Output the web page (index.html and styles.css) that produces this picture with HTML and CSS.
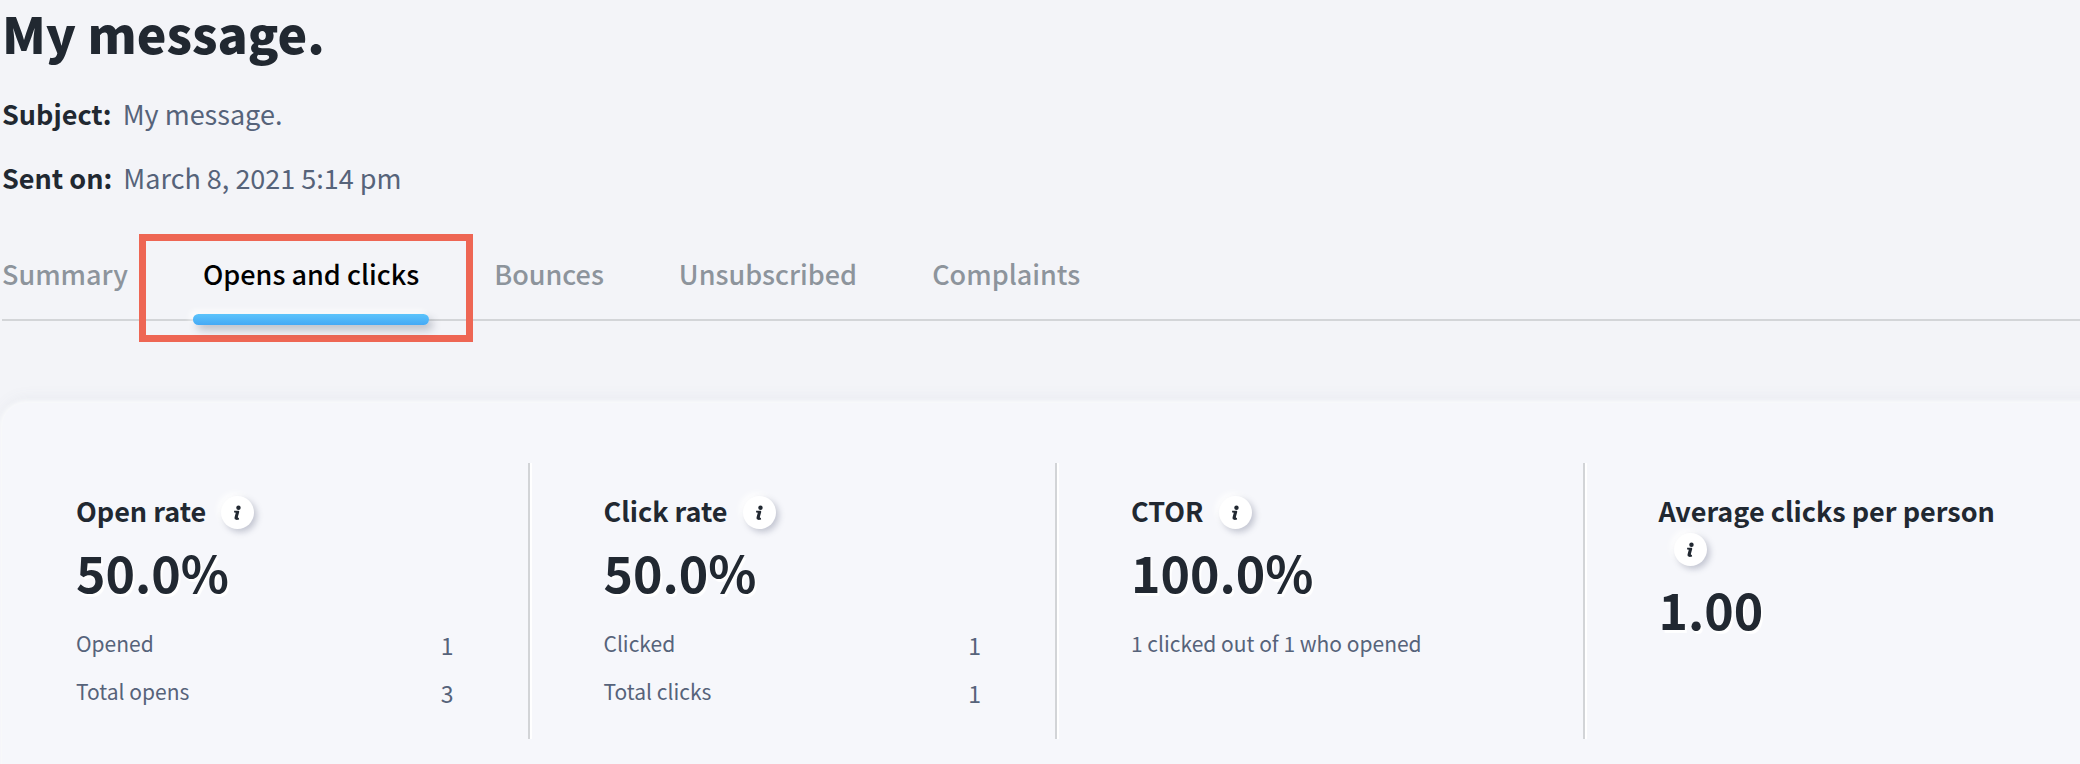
FILE: index.html
```html
<!DOCTYPE html>
<html lang="en">
<head>
    <meta charset="UTF-8">
    <meta name="viewport" content="width=device-width, initial-scale=1.0">
    <title>My message.</title>
    <link rel="stylesheet" href="styles.css">
</head>
<body>
    <header class="header">
        <h1 class="title">My message.</h1>
        <p class="meta"><strong>Subject:</strong> <span>My message.</span></p>
        <p class="meta"><strong>Sent on:</strong> <span>March 8, 2021 5:14 pm</span></p>
    </header>

    <nav class="tabs">
        <a class="tab" href="#summary">Summary</a>
        <a class="tab active" href="#opens">Opens and clicks</a>
        <a class="tab" href="#bounces">Bounces</a>
        <a class="tab" href="#unsubscribed">Unsubscribed</a>
        <a class="tab" href="#complaints">Complaints</a>
    </nav>

    <main class="card">
        <section class="stat">
            <h2 class="stat-title">Open rate<button class="info" type="button" aria-label="About open rate"><svg viewBox="0 0 34 34"><circle cx="18" cy="12" r="2.3"/><path d="M13.5 15.2h4.2c.9 0 1.3.7 1 1.6l-1.3 4.7c-.2.8.1 1.2.9 1l.4 1.6c-3 1.1-5.3.4-4.7-2.1l1.1-4.3c.2-.7-.2-.9-1.6-.8z"/></svg></button></h2>
            <p class="value">50.0%</p>
            <dl class="rows">
                <div class="row"><dt>Opened</dt><dd>1</dd></div>
                <div class="row"><dt>Total opens</dt><dd>3</dd></div>
            </dl>
        </section>

        <section class="stat">
            <h2 class="stat-title">Click rate<button class="info" type="button" aria-label="About click rate"><svg viewBox="0 0 34 34"><circle cx="18" cy="12" r="2.3"/><path d="M13.5 15.2h4.2c.9 0 1.3.7 1 1.6l-1.3 4.7c-.2.8.1 1.2.9 1l.4 1.6c-3 1.1-5.3.4-4.7-2.1l1.1-4.3c.2-.7-.2-.9-1.6-.8z"/></svg></button></h2>
            <p class="value">50.0%</p>
            <dl class="rows">
                <div class="row"><dt>Clicked</dt><dd>1</dd></div>
                <div class="row"><dt>Total clicks</dt><dd>1</dd></div>
            </dl>
        </section>

        <section class="stat">
            <h2 class="stat-title">CTOR<button class="info" type="button" aria-label="About CTOR"><svg viewBox="0 0 34 34"><circle cx="18" cy="12" r="2.3"/><path d="M13.5 15.2h4.2c.9 0 1.3.7 1 1.6l-1.3 4.7c-.2.8.1 1.2.9 1l.4 1.6c-3 1.1-5.3.4-4.7-2.1l1.1-4.3c.2-.7-.2-.9-1.6-.8z"/></svg></button></h2>
            <p class="value">100.0%</p>
            <p class="note">1 clicked out of 1 who opened</p>
        </section>

        <section class="stat">
            <h2 class="stat-title">Average clicks per person<button class="info" type="button" aria-label="About average clicks per person"><svg viewBox="0 0 34 34"><circle cx="18" cy="12" r="2.3"/><path d="M13.5 15.2h4.2c.9 0 1.3.7 1 1.6l-1.3 4.7c-.2.8.1 1.2.9 1l.4 1.6c-3 1.1-5.3.4-4.7-2.1l1.1-4.3c.2-.7-.2-.9-1.6-.8z"/></svg></button></h2>
            <p class="value">1.00</p>
        </section>
    </main>
</body>
</html>
```
FILE: styles.css
```css
* {
    box-sizing: border-box;
}

body {
    margin: 0;
    padding-left: 2px;
    background-color: #f3f4f8;
    color: #212831;
    font-family: "Noto Sans CJK SC", "Open Sans", sans-serif;
    overflow: hidden;
}

h1, h2, p, dl, dd {
    margin: 0;
}

.title {
    padding-bottom: 18px;
    font-size: 50px;
    font-weight: 900;
    line-height: 64px;
}

.meta {
    display: flex;
    gap: 11px;
    font-size: 27px;
    line-height: 64px;
}

.meta span {
    color: #56637a;
}

.tabs {
    display: flex;
    gap: 75px;
    height: 111px;
    border-bottom: 2px solid #d3d5d8;
}

.tab {
    position: relative;
    padding-top: 40px;
    color: #8d949c;
    font-size: 27px;
    font-weight: 500;
    line-height: 48px;
    text-decoration: none;
}

.active {
    color: #000;
}

/* blue bar under the current tab */
.active::after {
    content: "";
    position: absolute;
    left: -10px;
    right: -10px;
    bottom: -6px;
    height: 11px;
    border-radius: 6px;
    background: linear-gradient(#5cc4fb, #45a9f5);
    box-shadow: 4px 5px 8px rgba(60, 70, 90, 0.3), -3px -3px 6px #fff;
}

/* red frame around the current tab */
.active::before {
    content: "";
    position: absolute;
    left: -64px;
    right: -54px;
    top: 24px;
    bottom: -23px;
    border: 7px solid #ee6654;
}

.card {
    display: grid;
    grid-template-columns: repeat(4, 1fr);
    margin-top: 82px;
    margin-right: -32px;
    padding: 60px 0;
    border-radius: 24px;
    background-color: #f6f7fb;
    box-shadow: 0 0 4px 2px #fbfcfd, 0 -4px 16px rgba(100, 110, 140, 0.08);
}

.stat {
    min-height: 276px;
    padding: 29px 74px 0;
    border-right: 2px solid #d2d4d7;
    box-shadow: 2px 0 0 #fff;
}

.stat:last-child {
    border-right: none;
    box-shadow: none;
}

.stat-title {
    font-size: 27px;
    font-weight: 700;
    line-height: 37px;
}

.info {
    width: 33px;
    height: 33px;
    margin: -2px 0 2px 15px;
    padding: 0;
    border: none;
    border-radius: 50%;
    background-color: #fff;
    box-shadow: 3px 3px 6px rgba(60, 70, 100, 0.28), -3px -3px 6px #fff;
    vertical-align: middle;
    cursor: pointer;
}

.info svg {
    display: block;
    width: 33px;
    height: 33px;
    fill: #212831;
}

.value {
    padding-bottom: 7px;
    font-size: 50px;
    font-weight: 700;
    line-height: 81px;
    text-shadow: 2px 3px 1px #fff;
}

.rows, .note {
    color: #56637a;
    font-size: 21px;
    line-height: 48px;
}

.row {
    display: flex;
    justify-content: space-between;
}

.row dd {
    padding-top: 4px;
    font-size: 23px;
    line-height: 44px;
}
```
